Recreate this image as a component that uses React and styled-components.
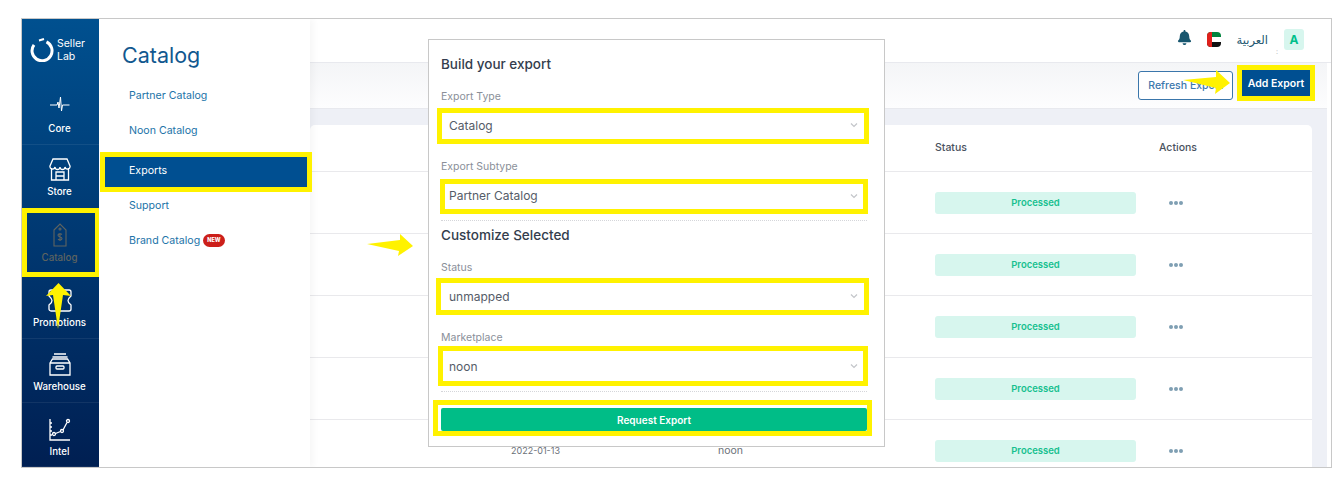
import React from 'react'
import styled, { createGlobalStyle } from 'styled-components'
import { FaBell } from 'react-icons/fa'

const FONT = `"Inter", "Noto Sans", "Liberation Sans", sans-serif`
const BLUE = '#004f91'
const YELLOW = '#fff200'

const GlobalStyle = createGlobalStyle`
  html, body {
    margin: 0;
    background: #fff;
    font-family: ${FONT};
  }
  * { box-sizing: border-box; }
`

const Page = styled.div`
  padding: 18px 0 0 21px;
  width: 1340px;
  height: 502px;
  overflow: hidden;
`

const Frame = styled.div`
  position: relative;
  display: flex;
  width: 1311px;
  height: 450px;
  border: 1px solid #c8c8c8;
  overflow: hidden;
`

const Sidebar = styled.aside`
  width: 77px;
  flex-shrink: 0;
  display: flex;
  flex-direction: column;
  background: linear-gradient(180deg, #00508f 0%, #001f52 100%);
`

const Brand = styled.div`
  height: 63px;
  display: flex;
  align-items: center;
  gap: 3px;
  padding: 0 0 0 8px;
  color: #fff;
  font-size: 10.5px;
  line-height: 13px;
  svg { flex-shrink: 0; }
`

const NavItem = styled.div`
  position: relative;
  height: ${p => p.$h}px;
  display: flex;
  flex-direction: column;
  align-items: center;
  justify-content: flex-end;
  padding: 0 2px ${p => p.$pb || 10}px 0;
  gap: ${p => p.$gap || 5}px;
  border-bottom: 1px solid rgba(255, 255, 255, 0.07);
  color: ${p => (p.$dim ? '#5f6460' : '#fff')};
  font-size: 9.75px;
  font-weight: 500;
`

const Panel = styled.nav`
  width: 211px;
  flex-shrink: 0;
  background: #fff;
  padding-top: 22px;
  box-shadow: 4px 0 6px rgba(0, 0, 0, 0.03);
  z-index: 1;
`

const PanelTitle = styled.h2`
  margin: 0 0 11px 23px;
  font-size: 21.5px;
  line-height: 28px;
  font-weight: 400;
  color: #11588f;
`

const PanelItem = styled.div`
  position: relative;
  height: 30px;
  margin: ${p => (p.$active ? '12px 3px 3px 6px' : '0 3px 5px 6px')};
  padding: ${p => (p.$active ? '0 0 4px 24px' : '0 0 0 24px')};
  display: flex;
  align-items: center;
  gap: 3px;
  font-size: 10.6px;
  color: ${p => (p.$active ? '#fff' : '#2273a8')};
  background: ${p => (p.$active ? BLUE : 'transparent')};
`

const NewBadge = styled.span`
  background: #cc1f1a;
  color: #fff;
  border-radius: 7px;
  font-size: 5.5px;
  font-weight: 800;
  padding: 4px 4px;
  line-height: 5px;
`

const Main = styled.main`
  flex: 1;
  min-width: 0;
  display: flex;
  flex-direction: column;
`

const TopBar = styled.header`
  height: 44px;
  flex-shrink: 0;
  background: #fff;
  border-bottom: 1px solid #e8e9ee;
  display: flex;
  align-items: center;
  justify-content: flex-end;
  padding: 0 27px 3px 0;
`

const Bell = styled(FaBell)`
  margin: 0 15px 3px 0;
  color: #17566f;
`

const Lang = styled.span`
  font-size: 11.5px;
  color: #22566f;
  margin: 0 8px 0 16px;
  font-family: "Noto Sans", "DejaVu Sans", sans-serif;
`

const Sep = styled.span`
  width: 2px;
  align-self: flex-end;
  margin-bottom: 3px;
  font-size: 7px;
  color: #b5b8bd;
`

const Avatar = styled.span`
  width: 20px;
  height: 21px;
  border-radius: 3px;
  background: #d7f6ee;
  color: #00bf8a;
  font-size: 12px;
  font-weight: 700;
  display: flex;
  align-items: center;
  justify-content: center;
  margin-left: 6px;
`

const Content = styled.div`
  flex: 1;
  min-height: 0;
  margin-right: 4px;
  background: #eef0f6;
`

const SubHeader = styled.div`
  height: 46px;
  background: linear-gradient(180deg, #f4f5f7 0%, #fdfdfe 100%);
  border-bottom: 1px solid #e8e9ee;
  display: flex;
  align-items: center;
  justify-content: flex-end;
  gap: 9px;
  padding-right: 17px;
`

const RefreshButton = styled.button`
  width: 95px;
  height: 29px;
  border: 1px solid #3a76ab;
  border-radius: 3px;
  background: #fff;
  color: #3c78ad;
  font: 500 10.5px ${FONT};
  padding: 0;
  white-space: nowrap;
`

const AddButton = styled.button`
  position: relative;
  width: 68px;
  height: 26px;
  margin-bottom: 5px;
  border: 0;
  background: ${BLUE};
  color: #fff;
  font: 600 10.5px ${FONT};
  padding: 0;
`

const Card = styled.section`
  margin: 16px 15px 0 0;
  background: #fff;
  border-radius: 5px 5px 0 0;
`

const Row = styled.div`
  display: grid;
  grid-template-columns: 201px 207px 217px 224px 1fr;
  height: ${p => (p.$head ? 47 : 62)}px;
  align-items: center;
  padding-bottom: ${p => (p.$head ? 2 : 0)}px;
  border-bottom: 1px solid #e9e9ec;
  font-size: 10.5px;
  color: ${p => (p.$head ? '#4a5260' : '#6a6f78')};
  font-weight: ${p => (p.$head ? 500 : 400)};
`

const DateCell = styled.span`
  font-size: 9px;
`

const Status = styled.span`
  display: flex;
  align-items: center;
  justify-content: center;
  width: 201px;
  height: 22px;
  border-radius: 3px;
  background: #d7f6ee;
  color: #16c08f;
  font-size: 9.5px;
  font-weight: 600;
`

const Dots = styled.span`
  display: flex;
  gap: 1px;
  margin-left: 10px;
  i {
    width: 4px;
    height: 4px;
    border-radius: 50%;
    background: #7f9fb3;
  }
`

const Modal = styled.div`
  position: absolute;
  left: 406px;
  top: 20px;
  width: 457px;
  height: 408px;
  background: #fff;
  border: 1px solid #c8c8c8;
  padding: 14px 17px 0 12px;
  z-index: 3;
`

const ModalTitle = styled.h3`
  margin: ${p => p.$top || 0}px 0 0;
  font-size: 13.5px;
  line-height: 20px;
  font-weight: 500;
  color: #333d4d;
`

const Label = styled.div`
  margin-top: ${p => p.$top}px;
  height: 14px;
  font-size: 10.5px;
  line-height: 16px;
  color: #8a8f99;
`

const SelectBox = styled.div`
  display: flex;
  align-items: center;
  justify-content: space-between;
  height: ${p => p.$h}px;
  margin: ${p => p.$top}px ${p => p.$right}px 0 ${p => p.$left}px;
  padding: 0 ${p => 3 - p.$right}px ${p => p.$pb || 0}px ${p => 3 - p.$left}px;
  border: 5px solid ${YELLOW};
  font-size: 12px;
  color: #555c68;
`

const Rule = styled.div`
  margin-top: ${p => p.$top}px;
  border-top: 1px dotted #d5d6da;
`

const RequestBox = styled.div`
  margin: 8px -5px 0 -8px;
  border: 5px solid ${YELLOW};
  padding: 3px 0 0 3px;
  height: 36px;
`

const RequestButton = styled.button`
  display: block;
  width: 100%;
  height: 23px;
  border: 0;
  border-radius: 2px;
  background: #00bd87;
  color: #fff;
  font: 600 10px ${FONT};
`

const Highlight = styled.span`
  position: absolute;
  top: ${p => p.$t}px;
  right: ${p => p.$r}px;
  bottom: ${p => p.$b}px;
  left: ${p => p.$l}px;
  border: 5px solid ${YELLOW};
  pointer-events: none;
`

const Arrow = styled.svg`
  position: absolute;
  left: ${p => p.$x}px;
  top: ${p => p.$y}px;
  z-index: 4;
`

const Chevron = () => (
  <svg width="10" height="10" viewBox="0 0 10 10" fill="none" stroke="#c3c5c9" strokeWidth="1.2">
    <path d="M2 3.5l3 3 3-3" />
  </svg>
)

const Logo = () => (
  <svg width="24" height="24" viewBox="0 0 24 24" fill="none" stroke="#fff" strokeWidth="3">
    <path d="M16.5 3.8A10 10 0 1 1 4 6.8" />
    <path d="M9 2.5l5-1.5" strokeWidth="2" />
  </svg>
)

const stroke = { fill: 'none', stroke: '#fff', strokeWidth: 1.3 }

const CoreIcon = () => (
  <svg width="20" height="16" viewBox="0 0 20 16" {...stroke} strokeWidth="1">
    <path d="M0 9h7l1-3 1 6 1.500-11 1 14 1-6h7" />
  </svg>
)

const StoreIcon = () => (
  <svg width="22" height="23" viewBox="0 0 22 23" {...stroke}>
    <path d="M4 1h14l3 7a2.500 2.500 0 0 1-5 1 2.500 2.500 0 0 1-5 0 2.500 2.500 0 0 1-5 0 2.500 2.500 0 0 1-5-1z" />
    <path d="M2.500 10v12h17V10M7 22v-8h8v8M7 18h8" />
  </svg>
)

const TagIcon = () => (
  <svg width="14" height="24" viewBox="0 0 14 24" fill="none" stroke="#5f6460" strokeWidth="1.1">
    <path d="M1 7l6-6 6 6v16H1z" />
    <circle cx="7" cy="6" r="1" />
    <path d="M9 11.500c-1-1-4-1-4 .8s4 1.200 4 3.200-3 1.800-4 .7M7 10v8" />
  </svg>
)

const PromoIcon = () => (
  <svg width="26" height="23" viewBox="0 0 26 23" {...stroke}>
    <path d="M4 1h18a2 2 0 0 1 2 2v4c-1 1-3 2-3 4.500s2 3.500 3 4.500v4a2 2 0 0 1-2 2H4a2 2 0 0 1-2-2v-4c1-1 3-2 3-4.500S3 8 2 7V3a2 2 0 0 1 2-2z" />
    <path d="M9 5h1M9 11h1M9 17h1" />
  </svg>
)

const BoxIcon = () => (
  <svg width="22" height="23" viewBox="0 0 22 23" {...stroke}>
    <path d="M5 1h12M3.500 4h15M1 10l2.500-4h15L21 10v12H1zM1 10h20" />
    <rect x="7" y="13" width="8" height="3" rx="1" />
  </svg>
)

const ChartIcon = () => (
  <svg width="22" height="23" viewBox="0 0 22 23" {...stroke}>
    <path d="M1 1v21h20M1 5h2M1 9h2M1 13h2M1 17h2" />
    <circle cx="5" cy="16" r="1.500" />
    <circle cx="13" cy="13" r="1.500" />
    <circle cx="19" cy="3" r="1.500" />
    <path d="M6.500 15.500l5-2M14 12l4-7.500" />
  </svg>
)

const Flag = () => (
  <svg width="14" height="15" viewBox="0 0 14 15">
    <defs>
      <clipPath id="flagClip">
        <rect width="14" height="15" rx="4" />
      </clipPath>
    </defs>
    <g clipPath="url(#flagClip)">
      <rect width="14" height="5" fill="#00843d" />
      <rect y="5" width="14" height="5" fill="#fff" />
      <rect y="10" width="14" height="5" fill="#111" />
      <rect width="5" height="15" fill="#e0201b" />
    </g>
  </svg>
)

const navItems = [
  { label: 'Core', icon: <CoreIcon />, h: 63, gap: 11 },
  { label: 'Store', icon: <StoreIcon />, h: 64, pb: 11 },
  { label: 'Catalog', icon: <TagIcon />, h: 66, dim: true, mark: true },
  { label: 'Promotions', icon: <PromoIcon />, h: 65 },
  { label: 'Warehouse', icon: <BoxIcon />, h: 64 },
  { label: 'Intel', icon: <ChartIcon />, h: 64, pb: 9 },
]

const rows = ['', '', '', '', '2022-01-13']

const Select = ({ value, ...rest }) => (
  <SelectBox {...rest}>
    {value}
    <Chevron />
  </SelectBox>
)

const TableRow = ({ date }) => (
  <Row>
    <span />
    <DateCell>{date}</DateCell>
    <span>{date && 'noon'}</span>
    <Status>Processed</Status>
    <Dots><i /><i /><i /></Dots>
  </Row>
)

export default function App() {
  return (
    <Page>
      <GlobalStyle />
      <Frame>
        <Sidebar>
          <Brand>
            <Logo />
            <span>Seller<br />Lab</span>
          </Brand>
          {navItems.map(item => (
            <NavItem key={item.label} $h={item.h} $pb={item.pb} $gap={item.gap} $dim={item.dim}>
              {item.icon}
              {item.label}
              {item.mark && <Highlight $t={-1} $r={-1} $b={-4} $l={0} />}
            </NavItem>
          ))}
        </Sidebar>

        <Panel>
          <PanelTitle>Catalog</PanelTitle>
          <PanelItem>Partner Catalog</PanelItem>
          <PanelItem>Noon Catalog</PanelItem>
          <PanelItem $active>
            Exports
            <Highlight $t={-5} $r={-5} $b={-5} $l={-5} />
          </PanelItem>
          <PanelItem>Support</PanelItem>
          <PanelItem>Brand Catalog <NewBadge>NEW</NewBadge></PanelItem>
        </Panel>

        <Main>
          <TopBar>
            <Bell size={15} />
            <Flag />
            <Lang>العربية</Lang>
            <Sep>:</Sep>
            <Avatar>A</Avatar>
          </TopBar>
          <Content>
            <SubHeader>
              <RefreshButton>Refresh Export</RefreshButton>
              <AddButton>
                Add Export
                <Highlight $t={-5} $r={-5} $b={-5} $l={-5} />
              </AddButton>
            </SubHeader>
            <Card>
              <Row $head>
                <span />
                <span />
                <span />
                <span>Status</span>
                <span>Actions</span>
              </Row>
              {rows.map((date, i) => <TableRow key={i} date={date} />)}
            </Card>
          </Content>
        </Main>

        <Modal>
          <ModalTitle>Build your export</ModalTitle>
          <Label $top={15}>Export Type</Label>
          <Select value="Catalog" $top={5} $h={36} $left={-4} $right={-2} $pb={2} />
          <Label $top={15}>Export Subtype</Label>
          <Select value="Partner Catalog" $top={6} $h={35} $left={-1} $right={-1} $pb={2} />
          <Rule $top={6} />
          <ModalTitle $top={4}>Customize Selected</ModalTitle>
          <Label $top={15}>Status</Label>
          <Select value="unmapped" $top={4} $h={37} $left={-5} $right={-2} $pb={1} />
          <Label $top={15}>Marketplace</Label>
          <Select value="noon" $top={2} $h={40} $left={-3} $right={-1} />
          <Rule $top={5} />
          <RequestBox>
            <RequestButton>Request Export</RequestButton>
          </RequestBox>
        </Modal>

        <Arrow $x={345} $y={213} width="48" height="26" viewBox="0 0 48 26">
          <path d="M0 12L33 8L33 2L46 14L31 24L32 19z" fill={YELLOW} />
        </Arrow>
        <Arrow $x={24} $y={264} width="26" height="48" viewBox="0 0 26 48">
          <path d="M12.500 0L25 13L17 12L12 46L7 12L0 13z" fill={YELLOW} />
        </Arrow>
        <Arrow $x={1161} $y={50} width="50" height="26" viewBox="0 0 50 26">
          <path d="M0 11L33 8L33 1L47 14L32 25L33 19z" fill={YELLOW} />
        </Arrow>
      </Frame>
    </Page>
  )
}
